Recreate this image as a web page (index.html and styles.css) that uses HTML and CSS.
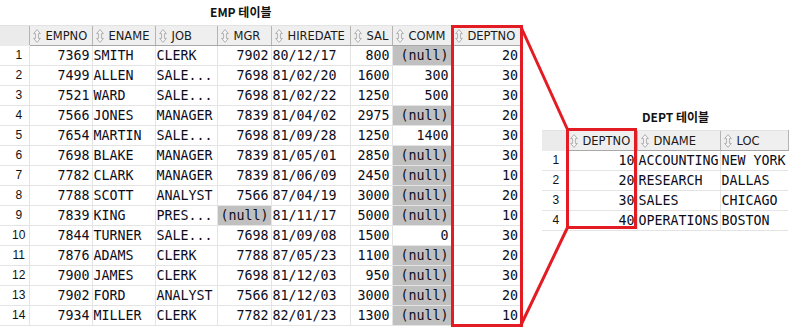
FILE: index.html
```html
<!DOCTYPE html>
<html>
<head>
<meta charset="utf-8">
<link rel="stylesheet" href="styles.css">
</head>
<body>
<div class="page">
  <section class="emp">
    <div class="title emp-title">EMP 테이블</div>
    <table class="grid">
      <colgroup>
        <col class="c-rn"><col class="c-empno"><col class="c-ename"><col class="c-job"><col class="c-mgr"><col class="c-hire"><col class="c-sal"><col class="c-comm"><col class="c-dept">
      </colgroup>
      <thead>
        <tr>
          <th class="rn-h"></th>
          <th><span class="sort"><svg width="8" height="14" viewBox="0 0 8 14"><path d="M4 0.6 L7.4 4.6 L5.4 4.6 L5.4 9.4 L7.4 9.4 L4 13.4 L0.6 9.4 L2.6 9.4 L2.6 4.6 L0.6 4.6 Z" fill="#f6f6f6" stroke="#a9a9a9" stroke-width="0.9"/></svg></span>EMPNO</th>
          <th><span class="sort"><svg width="8" height="14" viewBox="0 0 8 14"><path d="M4 0.6 L7.4 4.6 L5.4 4.6 L5.4 9.4 L7.4 9.4 L4 13.4 L0.6 9.4 L2.6 9.4 L2.6 4.6 L0.6 4.6 Z" fill="#f6f6f6" stroke="#a9a9a9" stroke-width="0.9"/></svg></span>ENAME</th>
          <th><span class="sort"><svg width="8" height="14" viewBox="0 0 8 14"><path d="M4 0.6 L7.4 4.6 L5.4 4.6 L5.4 9.4 L7.4 9.4 L4 13.4 L0.6 9.4 L2.6 9.4 L2.6 4.6 L0.6 4.6 Z" fill="#f6f6f6" stroke="#a9a9a9" stroke-width="0.9"/></svg></span>JOB</th>
          <th><span class="sort"><svg width="8" height="14" viewBox="0 0 8 14"><path d="M4 0.6 L7.4 4.6 L5.4 4.6 L5.4 9.4 L7.4 9.4 L4 13.4 L0.6 9.4 L2.6 9.4 L2.6 4.6 L0.6 4.6 Z" fill="#f6f6f6" stroke="#a9a9a9" stroke-width="0.9"/></svg></span>MGR</th>
          <th><span class="sort"><svg width="8" height="14" viewBox="0 0 8 14"><path d="M4 0.6 L7.4 4.6 L5.4 4.6 L5.4 9.4 L7.4 9.4 L4 13.4 L0.6 9.4 L2.6 9.4 L2.6 4.6 L0.6 4.6 Z" fill="#f6f6f6" stroke="#a9a9a9" stroke-width="0.9"/></svg></span>HIREDATE</th>
          <th><span class="sort"><svg width="8" height="14" viewBox="0 0 8 14"><path d="M4 0.6 L7.4 4.6 L5.4 4.6 L5.4 9.4 L7.4 9.4 L4 13.4 L0.6 9.4 L2.6 9.4 L2.6 4.6 L0.6 4.6 Z" fill="#f6f6f6" stroke="#a9a9a9" stroke-width="0.9"/></svg></span>SAL</th>
          <th><span class="sort"><svg width="8" height="14" viewBox="0 0 8 14"><path d="M4 0.6 L7.4 4.6 L5.4 4.6 L5.4 9.4 L7.4 9.4 L4 13.4 L0.6 9.4 L2.6 9.4 L2.6 4.6 L0.6 4.6 Z" fill="#f6f6f6" stroke="#a9a9a9" stroke-width="0.9"/></svg></span>COMM</th>
          <th><span class="sort"><svg width="8" height="14" viewBox="0 0 8 14"><path d="M4 0.6 L7.4 4.6 L5.4 4.6 L5.4 9.4 L7.4 9.4 L4 13.4 L0.6 9.4 L2.6 9.4 L2.6 4.6 L0.6 4.6 Z" fill="#f6f6f6" stroke="#a9a9a9" stroke-width="0.9"/></svg></span>DEPTNO</th>
        </tr>
      </thead>
      <tbody>
        <tr><td class="rn">1</td><td class="r">7369</td><td>SMITH</td><td>CLERK</td><td class="r">7902</td><td>80/12/17</td><td class="r">800</td><td class="r null">(null)</td><td class="r">20</td></tr>
        <tr><td class="rn">2</td><td class="r">7499</td><td>ALLEN</td><td>SALE...</td><td class="r">7698</td><td>81/02/20</td><td class="r">1600</td><td class="r">300</td><td class="r">30</td></tr>
        <tr><td class="rn">3</td><td class="r">7521</td><td>WARD</td><td>SALE...</td><td class="r">7698</td><td>81/02/22</td><td class="r">1250</td><td class="r">500</td><td class="r">30</td></tr>
        <tr><td class="rn">4</td><td class="r">7566</td><td>JONES</td><td>MANAGER</td><td class="r">7839</td><td>81/04/02</td><td class="r">2975</td><td class="r null">(null)</td><td class="r">20</td></tr>
        <tr><td class="rn">5</td><td class="r">7654</td><td>MARTIN</td><td>SALE...</td><td class="r">7698</td><td>81/09/28</td><td class="r">1250</td><td class="r">1400</td><td class="r">30</td></tr>
        <tr><td class="rn">6</td><td class="r">7698</td><td>BLAKE</td><td>MANAGER</td><td class="r">7839</td><td>81/05/01</td><td class="r">2850</td><td class="r null">(null)</td><td class="r">30</td></tr>
        <tr><td class="rn">7</td><td class="r">7782</td><td>CLARK</td><td>MANAGER</td><td class="r">7839</td><td>81/06/09</td><td class="r">2450</td><td class="r null">(null)</td><td class="r">10</td></tr>
        <tr><td class="rn">8</td><td class="r">7788</td><td>SCOTT</td><td>ANALYST</td><td class="r">7566</td><td>87/04/19</td><td class="r">3000</td><td class="r null">(null)</td><td class="r">20</td></tr>
        <tr><td class="rn">9</td><td class="r">7839</td><td>KING</td><td>PRES...</td><td class="r null">(null)</td><td>81/11/17</td><td class="r">5000</td><td class="r null">(null)</td><td class="r">10</td></tr>
        <tr><td class="rn">10</td><td class="r">7844</td><td>TURNER</td><td>SALE...</td><td class="r">7698</td><td>81/09/08</td><td class="r">1500</td><td class="r">0</td><td class="r">30</td></tr>
        <tr><td class="rn">11</td><td class="r">7876</td><td>ADAMS</td><td>CLERK</td><td class="r">7788</td><td>87/05/23</td><td class="r">1100</td><td class="r null">(null)</td><td class="r">20</td></tr>
        <tr><td class="rn">12</td><td class="r">7900</td><td>JAMES</td><td>CLERK</td><td class="r">7698</td><td>81/12/03</td><td class="r">950</td><td class="r null">(null)</td><td class="r">30</td></tr>
        <tr><td class="rn">13</td><td class="r">7902</td><td>FORD</td><td>ANALYST</td><td class="r">7566</td><td>81/12/03</td><td class="r">3000</td><td class="r null">(null)</td><td class="r">20</td></tr>
        <tr><td class="rn">14</td><td class="r">7934</td><td>MILLER</td><td>CLERK</td><td class="r">7782</td><td>82/01/23</td><td class="r">1300</td><td class="r null">(null)</td><td class="r">10</td></tr>
      </tbody>
    </table>
  </section>

  <section class="dept">
    <div class="title dept-title">DEPT 테이블</div>
    <table class="grid">
      <colgroup>
        <col class="d-rn"><col class="d-deptno"><col class="d-dname"><col class="d-loc">
      </colgroup>
      <thead>
        <tr>
          <th class="rn-h"></th>
          <th><span class="sort"><svg width="8" height="14" viewBox="0 0 8 14"><path d="M4 0.6 L7.4 4.6 L5.4 4.6 L5.4 9.4 L7.4 9.4 L4 13.4 L0.6 9.4 L2.6 9.4 L2.6 4.6 L0.6 4.6 Z" fill="#f6f6f6" stroke="#a9a9a9" stroke-width="0.9"/></svg></span>DEPTNO</th>
          <th><span class="sort"><svg width="8" height="14" viewBox="0 0 8 14"><path d="M4 0.6 L7.4 4.6 L5.4 4.6 L5.4 9.4 L7.4 9.4 L4 13.4 L0.6 9.4 L2.6 9.4 L2.6 4.6 L0.6 4.6 Z" fill="#f6f6f6" stroke="#a9a9a9" stroke-width="0.9"/></svg></span>DNAME</th>
          <th><span class="sort"><svg width="8" height="14" viewBox="0 0 8 14"><path d="M4 0.6 L7.4 4.6 L5.4 4.6 L5.4 9.4 L7.4 9.4 L4 13.4 L0.6 9.4 L2.6 9.4 L2.6 4.6 L0.6 4.6 Z" fill="#f6f6f6" stroke="#a9a9a9" stroke-width="0.9"/></svg></span>LOC</th>
        </tr>
      </thead>
      <tbody>
        <tr><td class="rn">1</td><td class="r">10</td><td>ACCOUNTING</td><td>NEW YORK</td></tr>
        <tr><td class="rn">2</td><td class="r">20</td><td>RESEARCH</td><td>DALLAS</td></tr>
        <tr><td class="rn">3</td><td class="r">30</td><td>SALES</td><td>CHICAGO</td></tr>
        <tr><td class="rn">4</td><td class="r">40</td><td>OPERATIONS</td><td>BOSTON</td></tr>
      </tbody>
    </table>
  </section>

  <svg class="overlay" width="793" height="329" viewBox="0 0 793 329">
    <g fill="none" stroke="#e31b23" stroke-width="3">
      <rect x="452.5" y="26.5" width="69" height="299"/>
      <rect x="567.5" y="129.5" width="68" height="98"/>
      <line x1="521" y1="27" x2="567.5" y2="129.5"/>
      <line x1="521" y1="325" x2="567.5" y2="227.5"/>
    </g>
  </svg>
</div>
</body>
</html>
```

FILE: styles.css
```css
html, body {
  margin: 0;
  padding: 0;
  background: #ffffff;
}

.page {
  position: relative;
  width: 793px;
  height: 329px;
  display: flex;
  align-items: flex-start;
  overflow: hidden;
}

.emp {
  width: 520px;
}

.dept {
  width: 246px;
  margin-left: 22px;
}

.title {
  font-family: "Noto Sans CJK KR", "Noto Sans", sans-serif;
  font-weight: 700;
  font-size: 12px;
  color: #111;
  line-height: 24px;
  height: 25px;
}

.emp-title {
  padding-left: 210px;
}

.dept-title {
  margin-top: 105px;
  padding-left: 100px;
}

.grid {
  border-collapse: collapse;
  table-layout: fixed;
  width: 100%;
}

.c-rn { width: 29px; }
.c-empno { width: 63px; }
.c-ename { width: 63px; }
.c-job { width: 62px; }
.c-mgr { width: 54px; }
.c-hire { width: 79px; }
.c-sal { width: 42px; }
.c-comm { width: 59px; }
.c-dept { width: 69px; }

.d-rn { width: 24px; }
.d-deptno { width: 71px; }
.d-dname { width: 83px; }
.d-loc { width: 68px; }

.grid th {
  height: 19px;
  padding: 0 0 0 3px;
  background: #efefef;
  border-left: 1px solid #b4b4b4;
  border-bottom: 1px solid #a8a8a8;
  border-top: 1px solid #e2e2e2;
  font-family: "DejaVu Sans", sans-serif;
  font-weight: 400;
  font-size: 11.5px;
  color: #1a1a1a;
  text-align: left;
  white-space: nowrap;
  overflow: hidden;
}

.grid th:last-child {
  border-right: 1px solid #b4b4b4;
}

.grid th.rn-h {
  background: #ebebeb;
  border-left: none;
  border-bottom: 1px solid #ebebeb;
}

.sort {
  display: inline-block;
  width: 8px;
  height: 14px;
  margin-right: 5px;
  vertical-align: -3px;
}

.sort svg {
  display: block;
}

.grid td {
  height: 19px;
  padding: 0 2px 0 1px;
  border-bottom: 1px solid #e4e4e4;
  border-left: 1px solid #e4e4e4;
  font-family: "DejaVu Sans Mono", monospace;
  font-size: 13.3px;
  color: #0c0c1a;
  line-height: 19px;
  white-space: nowrap;
  overflow: hidden;
}

.grid td.r {
  text-align: right;
}

.grid td.null {
  background: #c0c0c0;
}

.grid td.rn {
  border-left: none;
  font-family: "Liberation Sans", sans-serif;
  font-size: 12px;
  text-align: center;
  padding: 0 0 0 9px;
  color: #111;
}

.dept .grid td.rn {
  padding-left: 4px;
}

.overlay {
  position: absolute;
  left: 0;
  top: 0;
  pointer-events: none;
}
```
